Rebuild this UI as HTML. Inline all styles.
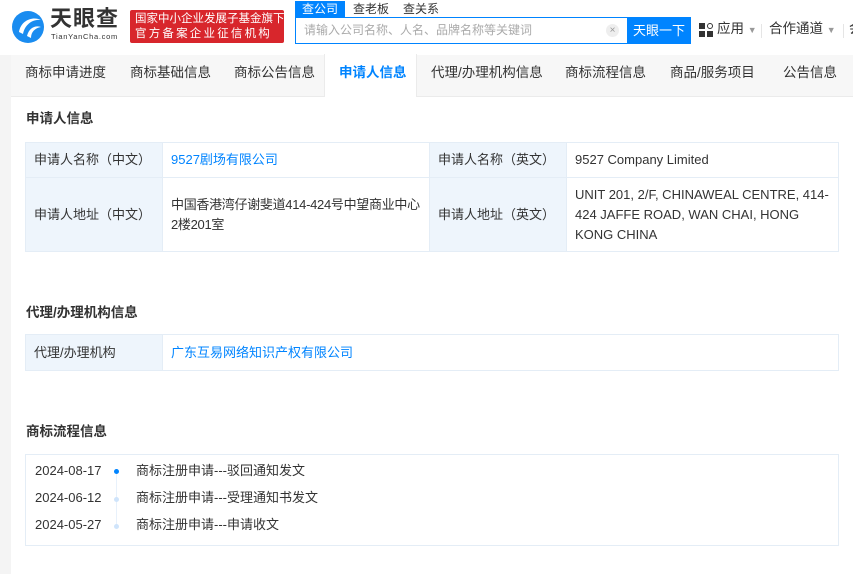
<!DOCTYPE html>
<html><head><meta charset="utf-8"><style>
*{margin:0;padding:0;box-sizing:border-box}
body{width:853px;height:574px;overflow:hidden;background:#fff;font-family:"Liberation Sans","Noto Sans CJK SC",sans-serif;font-size:13px;color:#333;position:relative;line-height:18px}
.a{position:absolute;white-space:nowrap}
.nav{position:absolute;left:11px;top:55px;width:842px;height:42px;background:#f7f7f7;border-bottom:1px solid #ebebeb}
.nav span{position:absolute;top:9px;font-size:13.5px;color:#333}
.left{position:absolute;left:0;top:55px;width:11px;height:519px;background:#f4f4f4}
h3{position:absolute;font-size:13.5px;font-weight:bold;color:#333;left:26px}
.c{position:absolute;border:1px solid #e4edf6;padding:0 8px;display:flex;align-items:center;line-height:20px}
.l{background:#eef5fc}
.blue{color:#0084ff}
</style></head><body>
<svg class="a" style="left:11px;top:10px" width="34" height="34" viewBox="0 0 34 34"><circle cx="17" cy="17" r="16" fill="#1a8cf0"/><path d="M8 22 C10 10,22 6,30 10 C22 9,14 14,12 24 Z" fill="#fff"/><path d="M16 26 C18 18,24 15,30 17 C24 18,20 22,20 28 Z" fill="#fff"/></svg>
<div class="a" style="left:50px;top:6px;font-size:22px;line-height:26px;font-weight:bold;color:#333;letter-spacing:1px">天眼查</div>
<div class="a" style="left:51px;top:32px;font-size:7.5px;line-height:9px;color:#333;letter-spacing:.7px">TianYanCha.com</div>
<div class="a" style="left:130px;top:10px;width:154px;height:33px;background:#d8262c;color:#fff;font-size:11.5px;line-height:15px;padding:2px 5px;border-radius:2px">国家中小企业发展子基金旗下<br><span style="letter-spacing:2.2px">官方备案企业征信机构</span></div>
<div class="a" style="left:295px;top:1px;width:50px;height:17px;background:#0084ff;color:#fff;font-size:12px;text-align:center;line-height:16px">查公司</div>
<div class="a" style="left:353px;top:0px;font-size:12px;color:#333">查老板</div>
<div class="a" style="left:403px;top:0px;font-size:12px;color:#333">查关系</div>
<div class="a" style="left:295px;top:17px;width:333px;height:27px;border:1px solid #0084ff;border-right:none"></div>
<div class="a" style="left:304px;top:21px;font-size:12px;color:#aaa">请输入公司名称、人名、品牌名称等关键词</div>
<div class="a" style="left:606px;top:24px;width:13px;height:13px;border-radius:50%;background:#eee;color:#999;font-size:10px;text-align:center;line-height:13px">×</div>
<div class="a" style="left:627px;top:17px;width:64px;height:27px;background:#0084ff;color:#fff;font-size:13px;text-align:center;line-height:27px">天眼一下</div>
<div class="a" style="left:699px;top:23px;width:14px;height:14px"><i style="position:absolute;left:0;top:0;width:6px;height:6px;background:#333"></i><i style="position:absolute;left:8px;top:0;width:6px;height:6px;border:1.5px solid #333;border-radius:50%"></i><i style="position:absolute;left:0;top:8px;width:6px;height:6px;background:#333"></i><i style="position:absolute;left:8px;top:8px;width:6px;height:6px;background:#333"></i></div>
<div class="a" style="left:717px;top:20px;font-size:13.5px">应用 <span style="color:#999;font-size:9px">▼</span></div>
<div class="a" style="left:761px;top:24px;width:1px;height:14px;background:#e5e5e5"></div>
<div class="a" style="left:769px;top:20px;font-size:13.5px">合作通道 <span style="color:#999;font-size:9px">▼</span></div>
<div class="a" style="left:843px;top:24px;width:1px;height:14px;background:#e5e5e5"></div>
<div class="a" style="left:849px;top:20px;font-size:13.5px">会</div>
<div class="left"></div>
<div class="nav">
<span style="left:14px">商标申请进度</span><span style="left:119px">商标基础信息</span><span style="left:223px">商标公告信息</span>
<div style="position:absolute;left:313px;top:-1px;width:93px;height:43px;background:#fff;border-left:1px solid #ebebeb;border-right:1px solid #ebebeb"></div>
<span style="left:328px;color:#0084ff;font-weight:bold">申请人信息</span>
<span style="left:420px">代理/办理机构信息</span><span style="left:554px">商标流程信息</span><span style="left:659px">商品/服务项目</span><span style="left:772px">公告信息</span>
</div>
<h3 style="top:110px">申请人信息</h3>
<div class="c l" style="left:25px;top:142px;width:138px;height:36px">申请人名称（中文）</div>
<div class="c blue" style="left:162px;top:142px;width:268px;height:36px">9527剧场有限公司</div>
<div class="c l" style="left:429px;top:142px;width:138px;height:36px">申请人名称（英文）</div>
<div class="c" style="left:566px;top:142px;width:273px;height:36px">9527 Company Limited</div>
<div class="c l" style="left:25px;top:177px;width:138px;height:75px">申请人地址（中文）</div>
<div class="c" style="left:162px;top:177px;width:268px;height:75px;white-space:normal;letter-spacing:-0.3px;padding-right:4px">中国香港湾仔谢斐道414-424号中望商业中心<br>2楼201室</div>
<div class="c l" style="left:429px;top:177px;width:138px;height:75px">申请人地址（英文）</div>
<div class="c" style="left:566px;top:177px;width:273px;height:75px;white-space:normal">UNIT 201, 2/F, CHINAWEAL CENTRE, 414-424 JAFFE ROAD, WAN CHAI, HONG KONG CHINA</div>
<h3 style="top:304px">代理/办理机构信息</h3>
<div class="c l" style="left:25px;top:334px;width:138px;height:37px">代理/办理机构</div>
<div class="c blue" style="left:162px;top:334px;width:677px;height:37px">广东互易网络知识产权有限公司</div>
<h3 style="top:423px">商标流程信息</h3>
<div class="a" style="left:25px;top:454px;width:814px;height:92px;border:1px solid #e4edf6"></div>
<div class="a" style="left:116px;top:472px;width:1px;height:56px;background:#e8f1fb"></div>
<div class="a" style="left:114px;top:469px;width:5px;height:5px;border-radius:50%;background:#0084ff"></div>
<div class="a" style="left:114px;top:497px;width:5px;height:5px;border-radius:50%;background:#cfe4fb"></div>
<div class="a" style="left:114px;top:524px;width:5px;height:5px;border-radius:50%;background:#cfe4fb"></div>
<div class="a" style="left:35px;top:462px">2024-08-17</div><div class="a" style="left:136px;top:462px">商标注册申请---驳回通知发文</div>
<div class="a" style="left:35px;top:489px">2024-06-12</div><div class="a" style="left:136px;top:489px">商标注册申请---受理通知书发文</div>
<div class="a" style="left:35px;top:516px">2024-05-27</div><div class="a" style="left:136px;top:516px">商标注册申请---申请收文</div>
</body></html>
